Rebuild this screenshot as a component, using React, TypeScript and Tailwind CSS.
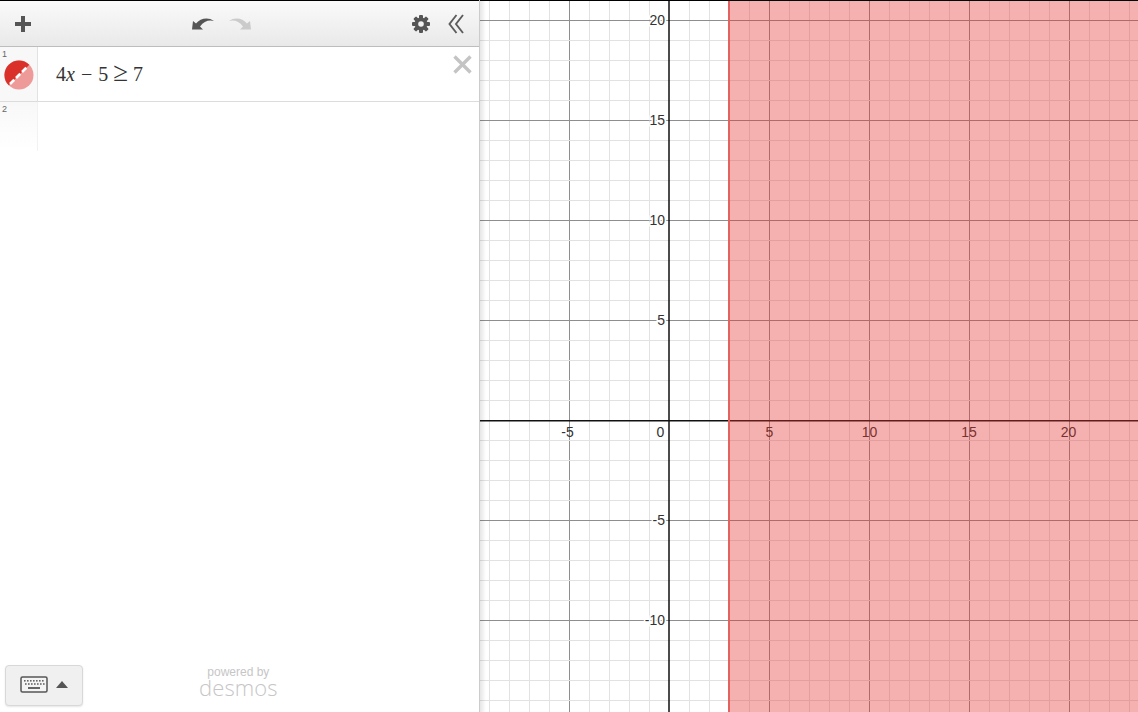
import React from "react";

const W = 658;
const H = 712;
const ox = 189.5;
const oy = 420.5;
const xs: number[] = [];
for (let i = -9; i <= 24; i++) xs.push(i);
const ys: number[] = [];
for (let i = -14; i <= 21; i++) ys.push(i);

function Graph() {
  const xl = [
    { t: "-5", x: 87.5 },
    { t: "0", x: 180.5 },
    { t: "5", x: 289.5 },
    { t: "10", x: 389.5 },
    { t: "15", x: 489 },
    { t: "20", x: 588.5 },
  ];
  const yl = [
    { t: "20", y: 20 },
    { t: "15", y: 120 },
    { t: "10", y: 220 },
    { t: "5", y: 320 },
    { t: "-5", y: 520 },
    { t: "-10", y: 620 },
  ];
  return (
    <svg width={W} height={H} viewBox={`0 0 ${W} ${H}`} className="block" shapeRendering="crispEdges">
      <rect width={W} height={H} fill="#fff" />
      {xs.filter((i) => i !== 0).map((i) => (
        <line key={"x" + i} x1={ox + i * 20} x2={ox + i * 20} y1={0} y2={H} stroke={i % 5 === 0 ? "#8e8e8e" : "#e2e2e2"} />
      ))}
      {ys.filter((i) => i !== 0).map((i) => (
        <line key={"y" + i} y1={oy - i * 20} y2={oy - i * 20} x1={0} x2={W} stroke={i % 5 === 0 ? "#8e8e8e" : "#e2e2e2"} />
      ))}
      <rect x={188.25} y={0} width={1.5} height={H} fill="#111" shapeRendering="auto" />
      <rect x={0} y={420} width={W} height={1.5} fill="#111" shapeRendering="auto" />
      <g fontFamily="'Liberation Sans', Arial, sans-serif" fontSize={14} fill="#333" shapeRendering="auto">
        {xl.map((l) => (
          <text key={l.t} x={l.x} y={437} textAnchor="middle">
            {l.t}
          </text>
        ))}
        {yl.map((l) => (
          <text key={l.t} x={185} y={l.y + 5} textAnchor="end" stroke="#fff" strokeWidth={3} paintOrder="stroke">
            {l.t}
          </text>
        ))}
      </g>
      <rect x={249} y={0} width={W - 249} height={H} fill="#e6332e" fillOpacity={0.38} />
      <rect x={248} y={0} width={2} height={H} fill="#e26161" />
    </svg>
  );
}

function Plus() {
  return (
    <svg width="18" height="18" viewBox="0 0 18 18">
      <path d="M7 1h4v6h6v4h-6v6H7v-6H1V7h6z" fill="#555" />
    </svg>
  );
}

function Undo({ flip, color }: { flip?: boolean; color: string }) {
  return (
    <svg width="22" height="13" viewBox="0 0 22 13" style={flip ? { transform: "scaleX(-1)" } : undefined}>
      <path d="M0 12.5 L1 4 L4 6.5 C8 1.5 16 -0.5 22 4 C17 2.5 12 4 8 9.5 L11 12.5 Z" fill={color} />
    </svg>
  );
}

function Gear() {
  const teeth = [0, 45, 90, 135];
  return (
    <svg width="18" height="18" viewBox="0 0 18 18">
      {teeth.map((a) => (
        <rect key={a} x="7" y="0" width="4" height="18" rx="1" fill="#555" transform={`rotate(${a} 9 9)`} />
      ))}
      <circle cx="9" cy="9" r="6.5" fill="#555" />
      <circle cx="9" cy="9" r="2.8" fill="#f0f0f0" />
    </svg>
  );
}

function Chevrons() {
  return (
    <svg width="16" height="20" viewBox="0 0 16 20" fill="none" stroke="#5c5c5c" strokeWidth="1.9">
      <path d="M8.5 1 L1.5 10 L8.5 19" />
      <path d="M15 1 L8 10 L15 19" />
    </svg>
  );
}

function ColorIcon() {
  return (
    <svg width="30" height="30" viewBox="0 0 30 30">
      <circle cx="15" cy="15" r="14.5" fill="#ee9a98" />
      <path d="M4.7 25.3 A14.5 14.5 0 0 1 25.3 4.7 Z" fill="#d9302a" />
      <line x1="6" y1="24" x2="24" y2="6" stroke="#fff" strokeWidth="2.6" strokeDasharray="6 2.5" />
    </svg>
  );
}

function Keyboard() {
  return (
    <svg width="28" height="17" viewBox="0 0 28 17">
      <rect x="1" y="1" width="26" height="15" rx="1.5" fill="#f4f4f4" stroke="#555" strokeWidth="1.5" />
      {[4, 7, 10, 13, 16, 19, 22].map((x) => (
        <rect key={x} x={x} y="4" width="1.6" height="1.6" fill="#666" />
      ))}
      {[5, 8, 11, 14, 17, 20, 23].map((x) => (
        <rect key={x} x={x} y="7.2" width="1.6" height="1.6" fill="#666" />
      ))}
      <rect x="8" y="11" width="12" height="2" fill="#666" />
    </svg>
  );
}

export default function App() {
  return (
    <div className="flex h-[712px] w-[1138px] overflow-hidden bg-white font-['Liberation_Sans',Arial,sans-serif]">
      <div className="relative flex w-[480px] shrink-0 flex-col border-r border-[#ccc]">
        <div className="flex h-[47px] items-center border-t border-b border-t-black border-b-[#bdbdbd] bg-gradient-to-b from-[#fafafa] to-[#e9e9e9] pl-[14px] pr-[15px]">
          <Plus />
          <div className="ml-[160px] flex items-center gap-[15px] pb-[1px]">
            <Undo color="#555" />
            <Undo flip color="#cbcbcb" />
          </div>
          <div className="ml-auto flex items-center gap-[18px]">
            <Gear />
            <Chevrons />
          </div>
        </div>

        <div className="relative flex h-[55px] border-b border-[#dcdcdc]">
          <div className="relative flex w-[38px] shrink-0 items-center justify-center border-r border-[#e2e2e2] bg-[#f8f8f8] pt-[1px]">
            <span className="absolute left-[2px] top-[2px] text-[9px] leading-[10px] text-[#666]">1</span>
            <ColorIcon />
          </div>
          <div className="flex items-center pb-[3px] pl-[18px]">
            <div className="flex items-baseline whitespace-nowrap font-['Liberation_Serif',serif] text-[20px] leading-[26px] text-[#333]">
              <span>4</span>
              <i>x</i>
              <span className="ml-[6px] mr-[6px]">−</span>
              <span>5</span>
              <span className="ml-[5px] mr-[5px] text-[27px] leading-[26px] font-light">≥</span>
              <span>7</span>
            </div>
          </div>
          <svg className="absolute right-[7px] top-[8px]" width="19" height="19" viewBox="0 0 19 19" stroke="#c4c4c4" strokeWidth="3.4">
            <path d="M1.5 1.5 L17.5 17.5 M17.5 1.5 L1.5 17.5" />
          </svg>
        </div>

        <div className="flex h-[49px]">
          <div className="relative w-[38px] shrink-0 border-r border-[#f2f2f2] bg-gradient-to-b from-[#f8f8f8] to-white">
            <span className="absolute left-[2px] top-[2px] text-[9px] leading-[10px] text-[#666]">2</span>
          </div>
        </div>

        <div className="mt-auto flex items-end pb-[6px] pl-[5px]">
          <div className="flex h-[41px] w-[78px] items-center justify-center gap-[8px] rounded-[4px] border border-[#d8d8d8] bg-[#f0f0f0] pb-[2px] shadow-[0_1px_2px_rgba(0,0,0,0.1)]">
            <Keyboard />
            <svg width="12" height="7" viewBox="0 0 12 7">
              <path d="M6 0 L12 7 H0 Z" fill="#555" />
            </svg>
          </div>
          <div className="ml-[116px] flex flex-col items-center pb-[8px] text-[#c6c6c6]">
            <span className="text-[12px] leading-[12px]">powered by</span>
            <span className="-mt-[2px] font-['Open_Sans',sans-serif] text-[22px] leading-[22px] font-light tracking-[0.1px]">desmos</span>
          </div>
        </div>
      </div>
      <div className="relative flex-1">
        <Graph />
        <div className="absolute left-0 right-0 top-0 h-px bg-black" />
        <div className="absolute left-0 top-0 h-full w-[6px] bg-gradient-to-r from-black/10 to-transparent" />
      </div>
    </div>
  );
}
